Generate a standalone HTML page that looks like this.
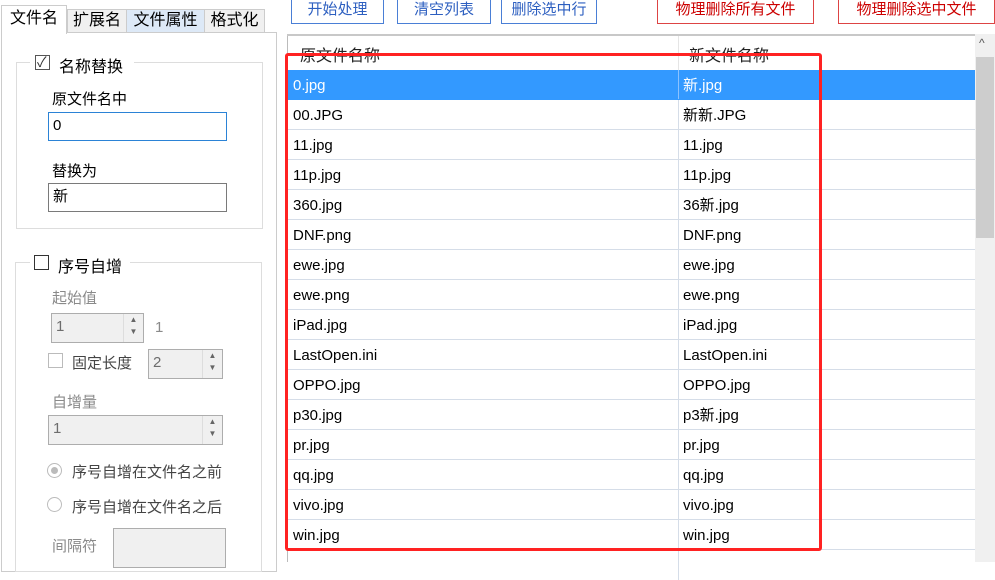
<!DOCTYPE html>
<html><head><meta charset="utf-8"><style>
*{box-sizing:border-box;margin:0;padding:0}
body{width:995px;height:562px;overflow:hidden;background:#fff;position:relative;font-family:"Liberation Sans","Noto Sans CJK SC",sans-serif;font-size:15px;color:#000}
.a{position:absolute}
.btn{position:absolute;top:-2px;height:26px;border:1px solid #4a7fd6;background:#fff;color:#2d5fc0;font-size:15px;text-align:center;line-height:22px}
.btn.r{border-color:#d44;color:#c00}
.tab{position:absolute;top:9px;height:24px;border:1px solid #ccc;border-bottom:none;background:#f0f0f0;text-align:center;line-height:22px;font-size:16px}
.in{position:absolute;border:1px solid #7a7a7a;background:#fff;font-size:15px;padding-left:4px;line-height:26px}
.dis{background:#f0f0f0;border-color:#adadad;color:#6d6d6d}
.g{color:#8a8a8a}
.row{position:absolute;left:288px;width:687px;height:30px;border-bottom:1px solid #d5dde8;line-height:31px}
.row span{position:absolute;left:5px}
.row span.n{left:395px}
.row i{position:absolute;left:390px;top:0;bottom:0;border-left:1px solid #d5dde8}
.spin{position:absolute;right:0;top:0;bottom:0;width:20px;border-left:1px solid #ddd;font-size:8px;color:#666;text-align:center;line-height:12px}
.cb{position:absolute;width:15px;height:15px;border:1px solid #333;background:#fff}
.rad{position:absolute;width:15px;height:15px;border:1px solid #bbb;border-radius:50%;background:#fff}
</style></head><body>
<div class="btn" style="left:291px;width:93px">开始处理</div>
<div class="btn" style="left:397px;width:94px">清空列表</div>
<div class="btn" style="left:501px;width:96px">删除选中行</div>
<div class="btn r" style="left:657px;width:157px">物理删除所有文件</div>
<div class="btn r" style="left:838px;width:157px">物理删除选中文件</div>

<div class="tab" style="left:67px;width:60px">扩展名</div>
<div class="tab" style="left:126px;width:79px;background:#dde9f7">文件属性</div>
<div class="tab" style="left:204px;width:61px">格式化</div>
<div class="a" style="left:1px;top:32px;width:276px;height:540px;border:1px solid #ccc;background:#fff"></div>
<div class="tab" style="left:1px;top:5px;width:66px;height:29px;background:#fff;line-height:26px;z-index:2">文件名</div>

<div class="a" style="left:16px;top:62px;width:247px;height:167px;border:1px solid #ddd"></div>
<div class="a" style="left:30px;top:52px;width:104px;height:22px;background:#fff"></div>
<div class="cb" style="left:35px;top:55px;border-color:#555"></div>
<div class="a" style="left:37px;top:52px;font-size:14px;color:#333">✓</div>
<div class="a" style="left:59px;top:53px;font-size:16px">名称替换</div>
<div class="a" style="left:52px;top:88px;font-size:15px">原文件名中</div>
<div class="in" style="left:48px;top:112px;width:179px;height:29px;border-color:#2b83d6">0</div>
<div class="a" style="left:52px;top:160px;font-size:15px">替换为</div>
<div class="in" style="left:48px;top:183px;width:179px;height:29px">新</div>

<div class="a" style="left:15px;top:262px;width:247px;height:310px;border:1px solid #ddd"></div>
<div class="a" style="left:30px;top:252px;width:100px;height:22px;background:#fff"></div>
<div class="cb" style="left:34px;top:255px;border-color:#333"></div>
<div class="a" style="left:58px;top:253px;font-size:16px">序号自增</div>
<div class="a g" style="left:52px;top:287px">起始值</div>
<div class="in dis" style="left:51px;top:313px;width:93px;height:30px">1<div class="spin">▲<br>▼</div></div>
<div class="a g" style="left:155px;top:319px">1</div>
<div class="cb" style="left:48px;top:353px;border-color:#bbb"></div>
<div class="a" style="left:72px;top:352px;color:#444">固定长度</div>
<div class="in dis" style="left:148px;top:349px;width:75px;height:30px">2<div class="spin">▲<br>▼</div></div>
<div class="a g" style="left:52px;top:391px">自增量</div>
<div class="in dis" style="left:48px;top:415px;width:175px;height:30px">1<div class="spin">▲<br>▼</div></div>
<div class="rad" style="left:47px;top:463px"><div class="a" style="left:3px;top:3px;width:7px;height:7px;border-radius:50%;background:#bbb"></div></div>
<div class="a" style="left:72px;top:461px;color:#444">序号自增在文件名之前</div>
<div class="rad" style="left:47px;top:497px"></div>
<div class="a" style="left:72px;top:496px;color:#444">序号自增在文件名之后</div>
<div class="a g" style="left:52px;top:535px">间隔符</div>
<div class="in dis" style="left:113px;top:528px;width:113px;height:40px"></div>

<div class="a" style="left:287px;top:34px;width:1px;height:528px;background:#bbb"></div>
<div class="a" style="left:287px;top:34px;width:688px;height:2px;background:#c8c8c8"></div>
<div class="a" style="left:678px;top:36px;width:1px;height:34px;background:#e5e5e5"></div>
<div class="a" style="left:300px;top:42px;font-size:16px;color:#222">原文件名称</div>
<div class="a" style="left:689px;top:42px;font-size:16px;color:#222">新文件名称</div>
<div class="row" style="top:70px;background:#3399ff;color:#fff;border-color:#3399ff"><span>0.jpg</span><i style="border-color:#8cc2ff"></i><span class="n">新.jpg</span></div>
<div class="row" style="top:100px"><span>00.JPG</span><i></i><span class="n">新新.JPG</span></div>
<div class="row" style="top:130px"><span>11.jpg</span><i></i><span class="n">11.jpg</span></div>
<div class="row" style="top:160px"><span>11p.jpg</span><i></i><span class="n">11p.jpg</span></div>
<div class="row" style="top:190px"><span>360.jpg</span><i></i><span class="n">36新.jpg</span></div>
<div class="row" style="top:220px"><span>DNF.png</span><i></i><span class="n">DNF.png</span></div>
<div class="row" style="top:250px"><span>ewe.jpg</span><i></i><span class="n">ewe.jpg</span></div>
<div class="row" style="top:280px"><span>ewe.png</span><i></i><span class="n">ewe.png</span></div>
<div class="row" style="top:310px"><span>iPad.jpg</span><i></i><span class="n">iPad.jpg</span></div>
<div class="row" style="top:340px"><span>LastOpen.ini</span><i></i><span class="n">LastOpen.ini</span></div>
<div class="row" style="top:370px"><span>OPPO.jpg</span><i></i><span class="n">OPPO.jpg</span></div>
<div class="row" style="top:400px"><span>p30.jpg</span><i></i><span class="n">p3新.jpg</span></div>
<div class="row" style="top:430px"><span>pr.jpg</span><i></i><span class="n">pr.jpg</span></div>
<div class="row" style="top:460px"><span>qq.jpg</span><i></i><span class="n">qq.jpg</span></div>
<div class="row" style="top:490px"><span>vivo.jpg</span><i></i><span class="n">vivo.jpg</span></div>
<div class="row" style="top:520px"><span>win.jpg</span><i></i><span class="n">win.jpg</span></div>
<div class="row" style="top:550px;border:none"><i></i></div>

<div class="a" style="left:975px;top:34px;width:20px;height:528px;background:#f0f0f0"></div>
<div class="a" style="left:979px;top:36px;font-size:12px;color:#555">&#94;</div>
<div class="a" style="left:976px;top:57px;width:18px;height:181px;background:#cdcdcd"></div>

<div class="a" style="left:285px;top:53px;width:537px;height:498px;border:3px solid #f22;border-radius:3px"></div>
</body></html>
